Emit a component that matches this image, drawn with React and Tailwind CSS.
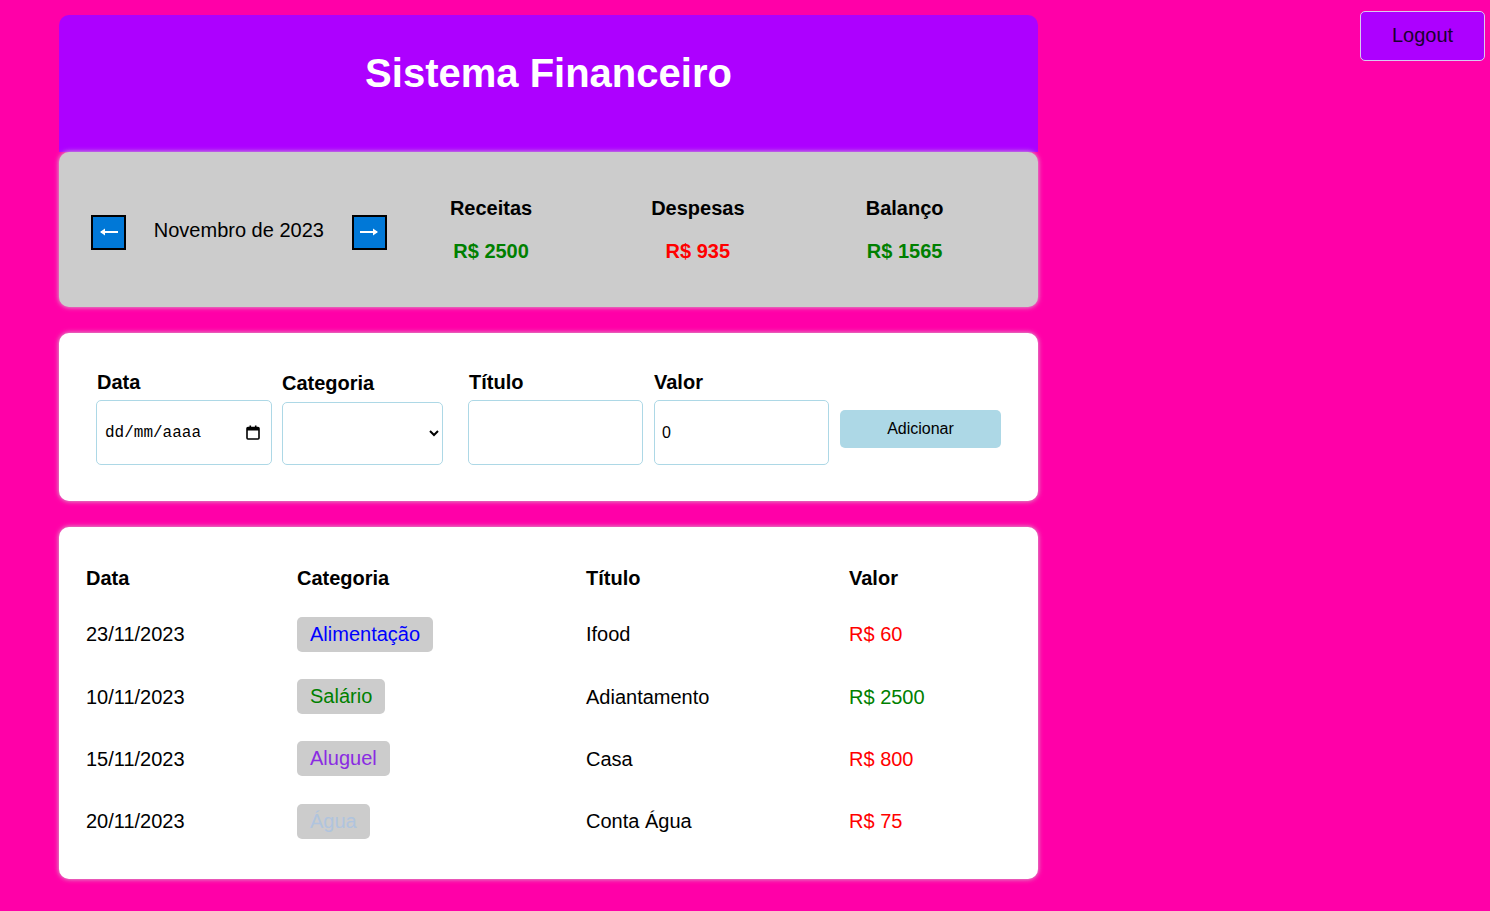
import { useState } from "react";

// lista de lançamentos do mês
const items = [
  { date: "23/11/2023", category: "Alimentação", catColor: "text-[#0000ff]", title: "Ifood", value: 60, expense: true },
  { date: "10/11/2023", category: "Salário", catColor: "text-[#008000]", title: "Adiantamento", value: 2500, expense: false },
  { date: "15/11/2023", category: "Aluguel", catColor: "text-[#8a2be2]", title: "Casa", value: 800, expense: true },
  { date: "20/11/2023", category: "Água", catColor: "text-[#b0c4de]", title: "Conta Água", value: 75, expense: true },
];

function ResumeItem({ title, value, color }) {
  return (
    <div className="w-[207px] flex flex-col items-center gap-[20px]">
      <div className="text-[20px] leading-[23px] font-bold text-black">{title}</div>
      <div className={"text-[20px] leading-[23px] font-bold " + color}>R$ {value}</div>
    </div>
  );
}

function Arrow({ left }) {
  return (
    <button className="w-[35px] h-[35px] mt-[5px] bg-[#0078d7] border-2 border-black flex items-center justify-center">
      <svg width="20" height="10" viewBox="0 0 20 10" className={left ? "" : "rotate-180"}>
        <path d="M2 5H19" stroke="#fff" strokeWidth="2" />
        <path d="M1 5L6 1.5V8.5Z" fill="#fff" />
      </svg>
    </button>
  );
}

function App() {
  const [valor, setValor] = useState(0);
  const [titulo, setTitulo] = useState("");

  return (
    <div className="min-h-screen bg-[#ff00a8] flex items-start font-['Liberation_Sans',Arial,sans-serif]">
      {/* container principal */}
      <div className="ml-[59px] mt-[15px] w-[979px] shrink-0 pb-[32px]">
        {/* cabeçalho */}
        <div className="h-[137px] bg-[#ad00ff] rounded-t-[10px] pt-[35px] text-center">
          <h1 className="text-[40px] leading-[46px] font-bold text-white">Sistema Financeiro</h1>
        </div>

        {/* area de info */}
        <div className="h-[155px] bg-[#cccccc] rounded-[10px] shadow-[0_0_5px_#ccc] pl-[32px] pr-[30px] flex items-center">
          <div className="w-[297px] flex items-center">
            <Arrow left />
            <div className="flex-1 text-center text-[20px] text-black">Novembro de 2023</div>
            <Arrow />
            <div className="w-[1px]" />
          </div>
          <ResumeItem title="Receitas" value={2500} color="text-[#008000]" />
          <ResumeItem title="Despesas" value={935} color="text-[#ff0000]" />
          <ResumeItem title="Balanço" value={1565} color="text-[#008000]" />
        </div>

        {/* formulario */}
        <div className="mt-[26px] bg-white rounded-[10px] shadow-[0_0_5px_#ccc] px-[37px] py-[36px] flex items-start gap-[10px]">
          <div className="w-[176px] shrink-0 flex flex-col">
            <div className="text-[20px] leading-[23px] font-bold mt-[2px] mb-[6px] pl-[1px]">Data</div>
            <div className="h-[65px] border border-[#add8e6] rounded-[5px] flex items-center justify-between pl-[8px] pr-[11px]">
              <span className="font-['Liberation_Mono',monospace] text-[16px] text-black">dd/mm/aaaa</span>
              <svg width="14" height="15" viewBox="0 0 14 15">
                <rect x="1" y="2.5" width="12" height="11.5" fill="none" stroke="#000" strokeWidth="1.6" rx="1" />
                <rect x="1" y="2.5" width="12" height="3" fill="#000" />
                <rect x="3.5" y="0.5" width="1.6" height="3" fill="#000" />
                <rect x="8.9" y="0.5" width="1.6" height="3" fill="#000" />
              </svg>
            </div>
          </div>
          <div className="w-[176px] shrink-0 flex flex-col">
            <div className="text-[20px] leading-[23px] font-bold mt-[3px] mb-[7px]">Categoria</div>
            <select className="w-[161px] h-[63px] border border-[#add8e6] rounded-[5px] bg-white px-[6px] text-[16px]">
              <option value=""></option>
              <option value="food">Alimentação</option>
              <option value="rent">Aluguel</option>
              <option value="salary">Salário</option>
            </select>
          </div>
          <div className="w-[176px] shrink-0 flex flex-col">
            <div className="text-[20px] leading-[23px] font-bold mt-[2px] mb-[6px] pl-[1px]">Título</div>
            <input
              value={titulo}
              onChange={(e) => setTitulo(e.target.value)}
              className="w-[175px] h-[65px] border border-[#add8e6] rounded-[5px] px-[7px] text-[16px] outline-none"
            />
          </div>
          <div className="w-[176px] shrink-0 flex flex-col">
            <div className="text-[20px] leading-[23px] font-bold mt-[2px] mb-[6px]">Valor</div>
            <input
              type="text"
              value={valor}
              onChange={(e) => setValor(e.target.value)}
              className="w-[175px] h-[65px] border border-[#add8e6] rounded-[5px] px-[7px] text-[16px] outline-none"
            />
          </div>
          <div className="w-[161px] shrink-0 pt-[41px]">
            <button className="w-[161px] h-[38px] bg-[#add8e6] rounded-[5px] text-[16px] text-black">Adicionar</button>
          </div>
        </div>

        {/* tabela */}
        <div className="mt-[26px] bg-white rounded-[10px] shadow-[0_0_5px_#ccc] pl-[27px] pr-[20px] py-[26px]">
          <div className="grid grid-cols-[211px_289px_263px_1fr] h-[50px] items-center text-[20px] font-bold text-black">
            <div>Data</div>
            <div>Categoria</div>
            <div>Título</div>
            <div>Valor</div>
          </div>
          {items.map((item, i) => (
            <div key={i} className="grid grid-cols-[211px_289px_263px_1fr] h-[62.4px] items-center text-[20px] text-black">
              <div>{item.date}</div>
              <div>
                <span className={"inline-block bg-[#cccccc] rounded-[5px] px-[13px] h-[35px] leading-[35px] " + item.catColor}>
                  {item.category}
                </span>
              </div>
              <div>{item.title}</div>
              <div className={item.expense ? "text-[#ff0000]" : "text-[#008000]"}>R$ {item.value}</div>
            </div>
          ))}
        </div>
      </div>

      <button className="ml-auto mr-[5px] mt-[11px] w-[125px] h-[50px] bg-[#ad00ff] border border-[#d8c8f0] rounded-[5px] text-[20px] leading-[22px] pb-[2px] text-[#1a0030]">
        Logout
      </button>
    </div>
  );
}

export default App;
